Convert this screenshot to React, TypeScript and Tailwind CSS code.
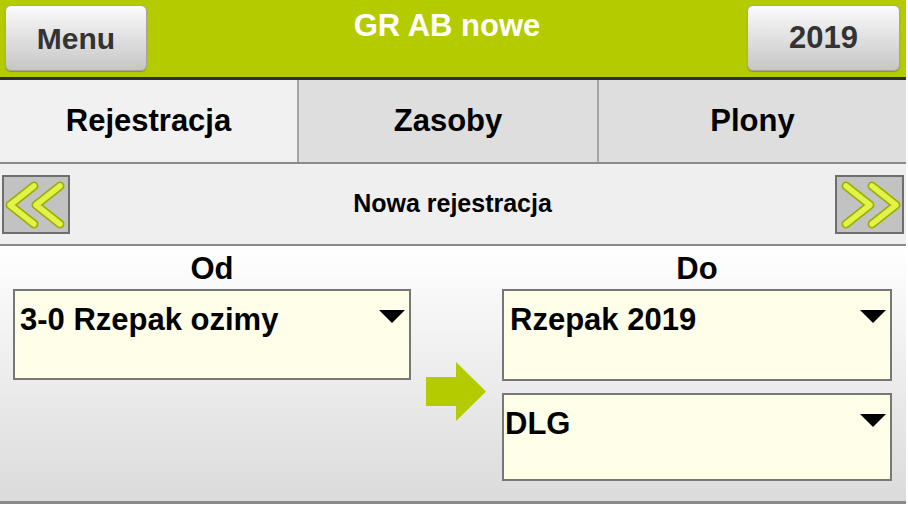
import React from "react";

const Tri = () => (
  <svg width="26" height="13" viewBox="0 0 26 13" className="shrink-0">
    <polygon points="0,0 26,0 13,13" fill="#000" />
  </svg>
);

const Chevrons = ({ dir }: { dir: "left" | "right" }) => {
  const left = (
    <>
      <polyline points="30,9 6,28 30,47" fill="none" stroke="#98b000" strokeWidth="9" strokeLinecap="round" strokeLinejoin="round" />
      <polyline points="56,9 32,28 56,47" fill="none" stroke="#98b000" strokeWidth="9" strokeLinecap="round" strokeLinejoin="round" />
      <polyline points="30,9 6,28 30,47" fill="none" stroke="#e2f248" strokeWidth="5.5" strokeLinecap="round" strokeLinejoin="round" />
      <polyline points="56,9 32,28 56,47" fill="none" stroke="#e2f248" strokeWidth="5.5" strokeLinecap="round" strokeLinejoin="round" />
    </>
  );
  return (
    <svg width="64" height="55" viewBox="0 0 64 55">
      {dir === "left" ? left : <g transform="translate(64,0) scale(-1,1)">{left}</g>}
    </svg>
  );
};

const Select = ({ text, className }: { text: string; className: string }) => (
  <div className={`flex justify-between items-start border-2 border-[#777] bg-[#fefee9] ${className}`}>
    <span className="text-[31px] leading-[34px] font-bold text-black">{text}</span>
    <div className="mt-[7px] mr-[4px]">
      <Tri />
    </div>
  </div>
);

export default function App() {
  return (
    <div className="w-[908px] h-[510px] bg-white font-['Liberation_Sans',Arial,sans-serif] overflow-hidden">
      <div className="w-[906px]">
        {/* Header */}
        <div className="h-[80px] bg-[#b4cb00] border-b-[3px] border-[#2e2e2e] flex items-start pl-[5px] pr-[6px] pt-[5px]">
          <button className="w-[142px] h-[66px] rounded-[6px] border border-[#a4a4a4] bg-gradient-to-b from-[#fbfbfb] to-[#c6c6c6] text-[30px] font-bold text-[#333] shadow-[0_1px_1px_rgba(0,0,0,0.25)]">
            Menu
          </button>
          <div className="flex-1 text-center pt-[3px] text-[31px] leading-[36px] font-bold text-white">GR AB nowe</div>
          <button className="w-[153px] h-[66px] rounded-[6px] border border-[#a4a4a4] bg-gradient-to-b from-[#fbfbfb] to-[#c6c6c6] text-[31px] font-bold text-[#333] shadow-[0_1px_1px_rgba(0,0,0,0.25)]">
            2019
          </button>
        </div>

        {/* Tabs */}
        <div className="h-[84px] flex border-b-2 border-[#8a8a8a]">
          <div className="w-[297px] bg-[#f1f1f1] flex items-center justify-center text-[31px] font-bold text-black">Rejestracja</div>
          <div className="w-[300px] bg-[#dedede] border-l-2 border-[#a5a5a5] flex items-center justify-center text-[31px] font-bold text-black">Zasoby</div>
          <div className="flex-1 bg-[#dedede] border-l-2 border-[#a5a5a5] flex items-center justify-center text-[31px] font-bold text-black">Plony</div>
        </div>

        {/* Nav */}
        <div className="h-[82px] bg-[#efefef] border-b-2 border-[#8a8a8a] flex items-center justify-between px-[2px]">
          <div className="w-[68px] h-[59px] bg-[#c2c2c2] border-2 border-[#6e6e6e] flex items-center justify-center">
            <Chevrons dir="left" />
          </div>
          <div className="text-[25px] font-bold text-black">Nowa rejestracja</div>
          <div className="w-[69px] h-[59px] bg-[#c2c2c2] border-2 border-[#6e6e6e] flex items-center justify-center">
            <Chevrons dir="right" />
          </div>
        </div>

        {/* Content */}
        <div className="h-[258px] bg-gradient-to-b from-white to-[#dbdbdb] border-b-[3px] border-[#8a8a8a] flex pl-[13px] pt-[6px]">
          <div className="w-[398px] flex flex-col">
            <div className="h-[34px] leading-[34px] text-center text-[31px] font-bold text-black">Od</div>
            <Select text="3-0 Rzepak ozimy" className="mt-[3px] h-[91px] pl-[5px] pt-[12px]" />
          </div>
          <div className="w-[91px] flex justify-center pt-[110px]">
            <svg width="61" height="59" viewBox="0 0 61 59">
              <polygon points="0,15 30,15 30,0 60,29.5 30,59 30,44 0,44" fill="#b4cb00" />
            </svg>
          </div>
          <div className="w-[390px] flex flex-col">
            <div className="h-[34px] leading-[34px] text-center text-[31px] font-bold text-black">Do</div>
            <Select text="Rzepak 2019" className="mt-[3px] h-[92px] pl-[6px] pt-[12px]" />
            <Select text="DLG" className="mt-[12px] h-[88px] pl-[1px] pt-[12px]" />
          </div>
        </div>
      </div>
    </div>
  );
}
